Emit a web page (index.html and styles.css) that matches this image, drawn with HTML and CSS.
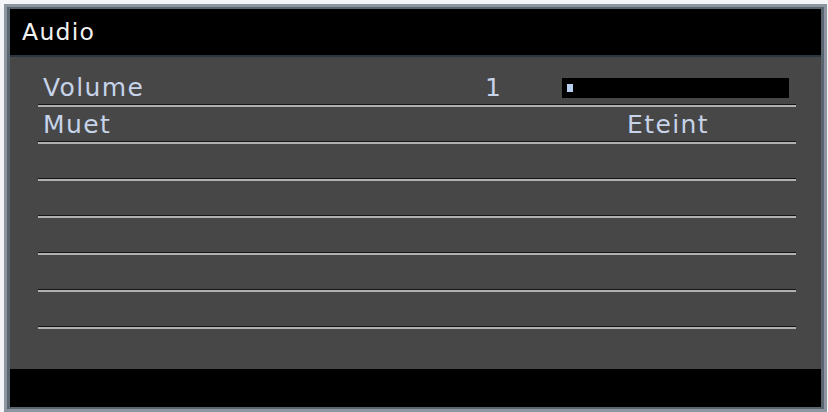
FILE: index.html
```html
<!DOCTYPE html>
<html lang="fr">
<head>
	<meta charset="utf-8">
	<title>Audio</title>
	<link rel="stylesheet" href="styles.css">
</head>
<body>

	<section class="osd">
		<header class="osd-title">Audio</header>

		<div class="osd-menu">
			<div class="item">
				<span class="label">Volume</span>
				<span class="num">1</span>
				<span class="bar"><span class="bar-fill"></span></span>
			</div>
			<div class="item">
				<span class="label">Muet</span>
				<span class="num"></span>
				<span class="value">Eteint</span>
			</div>
			<div class="item"></div>
			<div class="item"></div>
			<div class="item"></div>
			<div class="item"></div>
			<div class="item"></div>
		</div>

		<footer class="osd-footer"></footer>
	</section>

</body>
</html>
```

FILE: styles.css
```css
body {
	margin: 0;
	background-color: #f4f5f6;
	font-family: "DejaVu Sans", Verdana, sans-serif;
}
.osd {
	margin: 4px 1px 0 4px;
	width: 811px;
	border: 3px solid #8d96a0;
	box-shadow: inset 0 0 0 3px #5b6570;
	padding: 2px 3px;
	background-color: #000;
	display: flex;
	flex-direction: column;
}
.osd-title {
	box-sizing: border-box;
	height: 48px;
	border-bottom: 2px solid #2b3540;
	background-color: #000;
	color: #f2f2f2;
	font-size: 23.5px;
	letter-spacing: 1.3px;
	line-height: 28px;
	padding: 9px 0 0 12px;
}
.osd-menu {
	background-color: #474747;
	height: 312px;
	padding: 13px 25px 0 28px;
	box-sizing: border-box;
}
.item {
	height: 37px;
	box-sizing: border-box;
	border-bottom: 2px solid #b1b1b1;
	box-shadow: inset 0 -1px 0 #161616;
	display: grid;
	grid-template-columns: 449px 75px 227px;
	align-items: end;
	color: #c6d3e9;
	font-size: 25px;
	letter-spacing: 1.4px;
	line-height: 28px;
	padding-bottom: 3px;
}
.label {
	padding-left: 5px;
}
.num {
	margin-left: -2px;
}
.bar {
	height: 20px;
	margin-bottom: 4px;
	background-color: #000;
	position: relative;
}
.bar-fill {
	position: absolute;
	left: 5px;
	top: 6px;
	width: 6px;
	height: 8px;
	background-color: #b9cff0;
}
.value {
	padding-left: 65px;
}
.osd-footer {
	height: 38px;
	background-color: #000;
}
```
